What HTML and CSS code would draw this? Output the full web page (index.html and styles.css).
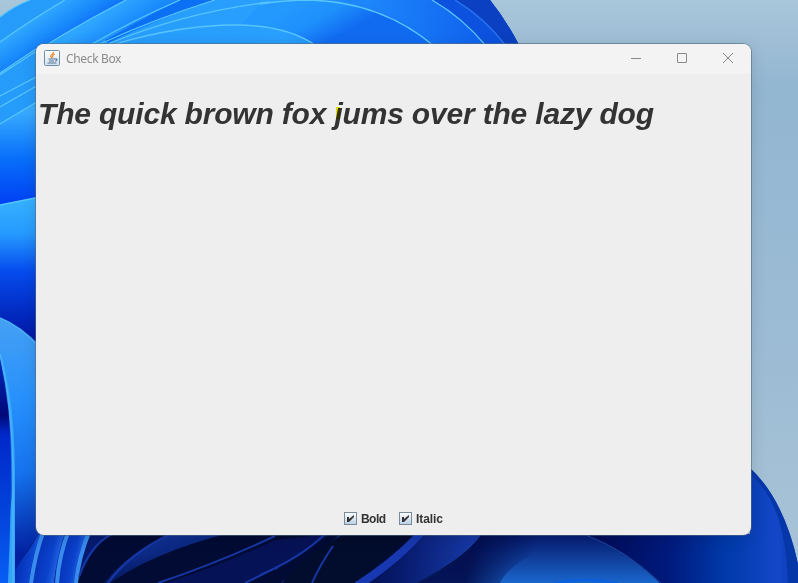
FILE: index.html
```html
<!DOCTYPE html>
<html lang="en">
<head>
<meta charset="utf-8">
<title>Check Box</title>
<link rel="stylesheet" href="styles.css">
</head>
<body>
<svg class="wallpaper" viewBox="0 0 798 583" aria-hidden="true">
  <defs>
    <linearGradient id="sky" x1="0" y1="0" x2="0" y2="1"><stop offset="0" stop-color="#a9c6da"/><stop offset=".15" stop-color="#93b6d1"/><stop offset=".55" stop-color="#9bbbd4"/><stop offset="1" stop-color="#a9c3d6"/></linearGradient>
    <linearGradient id="top" x1="0" y1="0" x2="520" y2="0" gradientUnits="userSpaceOnUse"><stop offset="0" stop-color="#259bfa"/><stop offset=".55" stop-color="#299fff"/><stop offset=".8" stop-color="#1671f4"/><stop offset="1" stop-color="#0b3ec4"/></linearGradient>
    <linearGradient id="ribbon2" x1="40" y1="16" x2="60" y2="46" gradientUnits="userSpaceOnUse"><stop offset="0" stop-color="#2ea6ff"/><stop offset=".5" stop-color="#1b8dfc"/><stop offset="1" stop-color="#0d6ff6"/></linearGradient>
    <linearGradient id="ribbon3" x1="80" y1="30" x2="108" y2="72" gradientUnits="userSpaceOnUse"><stop offset="0" stop-color="#2ea6ff"/><stop offset=".5" stop-color="#1888fc"/><stop offset="1" stop-color="#0868f4"/></linearGradient>
    <linearGradient id="arch" x1="300" y1="0" x2="325" y2="44" gradientUnits="userSpaceOnUse"><stop offset="0" stop-color="#2399fd"/><stop offset=".5" stop-color="#1e90fc"/><stop offset="1" stop-color="#116bf1"/></linearGradient>
    <linearGradient id="outer" x1="370" y1="0" x2="480" y2="20" gradientUnits="userSpaceOnUse"><stop offset="0" stop-color="#1d86fb"/><stop offset="1" stop-color="#1064ee"/></linearGradient>
    <linearGradient id="deep" x1="0" y1="112" x2="0" y2="204" gradientUnits="userSpaceOnUse"><stop offset="0" stop-color="#38aaff"/><stop offset=".5" stop-color="#0870fa"/><stop offset="1" stop-color="#0040f4"/></linearGradient>
    <linearGradient id="fold" x1="0" y1="200" x2="0" y2="335" gradientUnits="userSpaceOnUse"><stop offset="0" stop-color="#36b1ff"/><stop offset=".25" stop-color="#259aff"/><stop offset=".53" stop-color="#064bed"/><stop offset="1" stop-color="#0019aa"/></linearGradient>
    <linearGradient id="petal" x1="0" y1="320" x2="8" y2="555" gradientUnits="userSpaceOnUse"><stop offset="0" stop-color="#45a0f4"/><stop offset=".35" stop-color="#2690fc"/><stop offset=".65" stop-color="#1673ee"/><stop offset="1" stop-color="#0220a0"/></linearGradient>
    <linearGradient id="inner" x1="0" y1="350" x2="0" y2="583" gradientUnits="userSpaceOnUse"><stop offset="0" stop-color="#0030c8"/><stop offset=".28" stop-color="#000878"/><stop offset=".36" stop-color="#0028c8"/><stop offset=".72" stop-color="#0345dd"/><stop offset="1" stop-color="#075ef5"/></linearGradient>
    <linearGradient id="stripe" x1="0" x2="1" y1=".2" y2=".5"><stop offset="0" stop-color="#0428ac"/><stop offset=".6" stop-color="#0b42cc"/><stop offset="1" stop-color="#3986ef"/></linearGradient>
    <linearGradient id="navy" x1="0" y1="0" x2=".6" y2="1"><stop offset="0" stop-color="#153ba8"/><stop offset=".5" stop-color="#0b2780"/><stop offset="1" stop-color="#020b3e"/></linearGradient>
    <linearGradient id="navy2" x1="356" y1="550" x2="470" y2="560" gradientUnits="userSpaceOnUse"><stop offset="0" stop-color="#030c48"/><stop offset=".4" stop-color="#071a6c"/><stop offset="1" stop-color="#1638a4"/></linearGradient>
    <linearGradient id="glow" x1="0" y1="535" x2="0" y2="583" gradientUnits="userSpaceOnUse"><stop offset="0" stop-color="#061b70"/><stop offset=".5" stop-color="#103f9b"/><stop offset="1" stop-color="#1966cc"/></linearGradient>
    <linearGradient id="shade" x1="470" y1="560" x2="530" y2="575" gradientUnits="userSpaceOnUse"><stop offset="0" stop-color="#020b4a" stop-opacity=".9"/><stop offset="1" stop-color="#020b4a" stop-opacity="0"/></linearGradient>
    <linearGradient id="right" x1="600" y1="0" x2="798" y2="0" gradientUnits="userSpaceOnUse"><stop offset="0" stop-color="#000c58"/><stop offset=".35" stop-color="#001a7d"/><stop offset=".63" stop-color="#0039a9"/><stop offset=".9" stop-color="#1447c8"/><stop offset="1" stop-color="#0738b4"/></linearGradient>
  </defs>
  <rect width="798" height="583" fill="url(#sky)"/>
  <path d="M0 17Q14 6 30 0H490Q506 20 519 45V220H0Z" fill="url(#top)"/>
  <path d="M0 42Q34 18 65 0H126Q60 34 0 75Z" fill="url(#ribbon2)"/>
  <path d="M0 75Q60 34 126 0H198Q145 18 92 44H50L0 73Z" fill="url(#ribbon3)"/>
  <path d="M105 40Q150 15 180 0H215Q155 20 108 43Z" fill="#0b70f4"/>
  <path d="M260 4Q300-4 355 5 410 22 432 44H314Q290 28 240 25Z" fill="url(#arch)"/>
  <path d="M340 0H432Q463 18 484 45H432Q400 10 340 0Z" fill="url(#outer)"/>
  <path d="M432 0H490Q506 20 519 45H484Q465 19 432 0Z" fill="#0c52de"/>
  <path d="M470 0H490Q506 20 519 45H504Q489 20 455 0Z" fill="#0a40c1"/>
  <path d="M0 17Q14 6 30 0M0 42Q34 18 65 0M0 75Q60 34 126 0M92 44Q134 20 180 0M100 44Q155 19 215 0M108 44Q185 12 270 2M115 44Q180 25 235 25 286 25 315 45M260 4Q285 0 310 0 382 2 434 46M432 0Q463 18 486 46" class="edge"/>
  <path d="M455 0Q485 18 506 46" class="edge-dim"/>
  <path d="M0 124 40 100V205H0Z" fill="url(#deep)"/>
  <path d="M0 73 36 49M0 96 40 75M0 107 40 84M0 124 40 100" class="edge"/>
  <path d="M0 205 40 197V360H0Z" fill="url(#fold)"/>
  <path d="M0 205 40 197" class="edge"/>
  <path d="M0 318Q20 326 40 347V583H0Z" fill="url(#petal)"/>
  <path d="M0 318Q20 326 40 347" class="edge-soft"/>
  <path d="M0 353Q12 400 13 462 13 520 0 552V583H15V470Q14 390 0 353" fill="#35a4f6"/>
  <path d="M0 358Q11 407 11 462 11 520 8 583H0Z" fill="url(#inner)"/>
  <path d="M0 354Q13 405 13 480V583" class="edge-soft"/>
  <path d="M15 583Q18 560 40 534H770V583Z" fill="#010b34"/>
  <path d="M15 570 40 533 44 530Q32 561 29 583H15Z" fill="url(#stripe)"/>
  <path d="M42 530H68Q56 560 54 583H29Q31 557 42 530Z" fill="url(#stripe)"/>
  <path d="M66 530H90Q78 556 76 583H54Q57 553 66 530Z" fill="url(#stripe)"/>
  <path d="M92 530H112Q90 551 76 583 78 550 92 530Z" fill="#061b70"/>
  <path d="M31 583Q35 554 44 530M57 583Q59 555 69 530M76 583Q79 556 90 530" class="ribbon-line"/>
  <path d="M104 583Q132 550 170 534H226Q155 552 110 583Z" fill="url(#navy)"/>
  <path d="M165 583Q220 566 275 540L330 534Q300 556 248 583Z" fill="#061256"/>
  <path d="M108 583Q128 555 170 534M158 583Q220 562 275 536M245 583Q285 563 275 569M260 575Q300 558 324 535M282 583 342 534M312 583Q325 562 333 546M79 577Q90 545 112 534" class="navy-line"/>
  <path d="M282 583Q300 560 343 534H410L356 583Z" fill="#020c2c"/>
  <path d="M312 583Q320 565 333 546" class="navy-line"/>
  <path d="M370 583 424 534H482Q463 560 416 583Z" fill="url(#navy2)"/>
  <path d="M354 583Q390 560 415 534H425Q402 560 369 583Z" fill="#1738b0"/>
  <path d="M482 534H586Q624 549 660 583H416Q463 563 482 534Z" fill="url(#glow)"/>
  <path d="M482 534H575Q510 560 500 583H416Q463 563 482 534Z" fill="url(#shade)"/>
  <path d="M584 534H750V468Q784 499 798 564V583H660Q625 549 584 534Z" fill="url(#right)"/>
  <path d="M750 468Q784 500 798 564V583H788Q786 505 751 475Z" fill="#0637a9"/>
  <path d="M586 535Q626 550 661 583" stroke="#1b459e" fill="none"/>
  <path d="M555 583Q585 577 618 583" stroke="#075fe4" stroke-width="2" fill="none"/>
</svg>
<main class="window">
  <header class="titlebar">
    <svg class="app-icon" viewBox="0 0 16 16">
      <defs><linearGradient id="java" x1="0" y1="0" x2="0" y2="1"><stop stop-color="#fff"/><stop offset="1" stop-color="#d2e0ec"/></linearGradient></defs>
      <rect x=".5" y=".5" width="15" height="15" rx="1" fill="url(#java)" stroke="#708ea6"/>
      <path d="M9.6 2C10 4 6 4.8 6.7 6.5L8 8M10.8 4.3C8.2 5.2 8.2 6 9 7.6" fill="none" stroke="#f0852c" stroke-width="1.2"/>
      <path d="M4.5 9H11M5 11H10M11 9C14 8.2 13.6 10.7 11 11.2M3.5 13H12.5" fill="none" stroke="#55799a" stroke-width="1.1"/>
    </svg>
    <span class="title">Check Box</span>
    <div class="controls">
      <svg viewBox="0 0 12 12"><path d="M1 6.5H11"/></svg>
      <svg viewBox="0 0 12 12"><rect x="1.5" y="1.5" width="9" height="9" rx=".5"/></svg>
      <svg viewBox="0 0 12 12"><path d="M1 1 11 11M11 1 1 11"/></svg>
    </div>
  </header>
  <p class="sample"><svg class="sample-text" width="640" height="40"><text x="2" y="30" textLength="616">The quick brown fox jums over the lazy dog</text></svg><i class="pointer-mark"></i></p>
  <footer class="options">
    <label class="option"><svg class="box" viewBox="0 0 13 13"><rect x=".5" y=".5" width="12" height="12"/><path d="M3 5H5V7L10 3V5L5 10H3Z"/></svg><svg class="label-text" width="26" height="16"><text x="0" y="13" textLength="25">Bold</text></svg></label>
    <label class="option"><svg class="box" viewBox="0 0 13 13"><rect x=".5" y=".5" width="12" height="12"/><path d="M3 5H5V7L10 3V5L5 10H3Z"/></svg><svg class="label-text" width="28" height="16"><text x="0" y="13" textLength="27">Italic</text></svg></label>
  </footer>
  <svg class="paint-defs" width="0" height="0"><linearGradient id="check-fill" x1="0" y1="0" x2="0" y2="1"><stop stop-color="#fff"/><stop offset="1" stop-color="#b8cfe5"/></linearGradient></svg>
</main>
</body>
</html>
```
FILE: styles.css
```css
* { box-sizing: border-box; }
body {
  margin: 0;
  width: 798px;
  height: 583px;
  overflow: hidden;
  padding: 44px 0 0 36px;
  font-family: "Liberation Sans", Arial, sans-serif;
}
.wallpaper { position: absolute; inset: 0; width: 798px; height: 583px; }
.edge { fill: none; stroke: #58c6fb; stroke-width: 1.3; }
.edge-soft { fill: none; stroke: #4ab4f5; stroke-width: 1.5; }
.edge-dim { fill: none; stroke: #2770ec; stroke-width: 1.5; }
.ribbon-line { fill: none; stroke: #388cec; stroke-width: 4; }
.navy-line { fill: none; stroke: #1637a5; stroke-width: 2; }
.window {
  position: relative;
  display: flex;
  flex-direction: column;
  width: 715px;
  height: 491px;
  overflow: hidden;
  border-radius: 8px;
  background: #eee;
  box-shadow: 0 0 0 1px #536b7e99, 0 3px 16px #0002;
}
.titlebar {
  display: flex;
  align-items: center;
  height: 30px;
  flex: none;
  padding: 0 17px 2px 8px;
  background: #f3f3f3;
}
.app-icon { width: 16px; height: 16px; }
.title {
  margin-left: 6px;
  padding-top: 2px;
  color: #8b8b8b;
  font: 12px/16px "Noto Sans", sans-serif;
  letter-spacing: -.35px;
}
.controls { display: flex; gap: 34px; margin-left: auto; }
.controls svg { width: 12px; height: 12px; fill: none; stroke: #898989; stroke-width: 1; }
.sample { position: relative; height: 40px; margin: 20px 0 0; }
.sample-text { display: block; fill: #333; font-size: 30px; font-weight: bold; font-style: italic; }
.pointer-mark {
  position: absolute;
  left: 300px;
  top: 13px;
  width: 4px;
  height: 12px;
  background: #f5ed00;
  mix-blend-mode: multiply;
}
.options {
  display: flex;
  gap: 12px;
  height: 16px;
  margin: auto 0 9px 308px;
}
.option { display: flex; align-items: center; gap: 4px; }
.box { width: 13px; height: 13px; }
.box rect { fill: url(#check-fill); stroke: #7a8a99; }
.box path { fill: #333; }
.label-text { fill: #333; font-size: 12px; font-weight: bold; }
.paint-defs { position: absolute; }
```
